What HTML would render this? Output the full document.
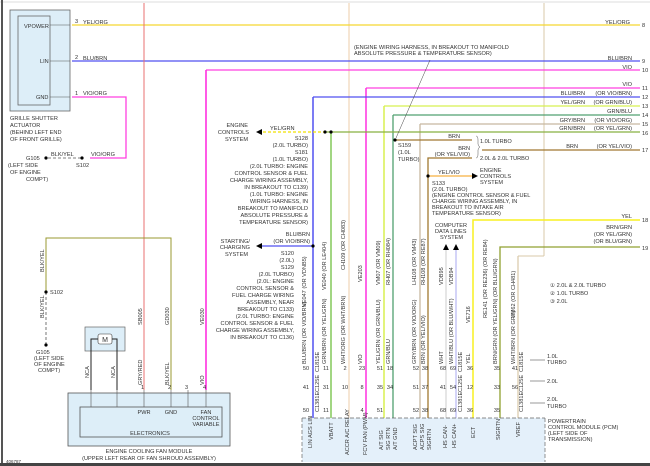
<!DOCTYPE html>
<html><head><meta charset="utf-8"><style>
html,body{margin:0;padding:0;background:#fff;}
svg{display:block;font-family:"Liberation Sans",sans-serif;}
text{font-size:5.6px;fill:#333;}
.r{text-anchor:end}
.m{text-anchor:middle}
</style></head><body>
<svg width="650" height="466" viewBox="0 0 650 466" xmlns="http://www.w3.org/2000/svg">
<rect width="650" height="466" fill="#fff"/>
<line x1="0" y1="2" x2="650" y2="2" stroke="#ddd" stroke-width="1"/>
<line x1="2" y1="0" x2="2" y2="466" stroke="#555" stroke-width="2"/>
<line x1="0" y1="464.5" x2="650" y2="464.5" stroke="#444" stroke-width="3"/>

<!-- light vertical tan guides -->
<line x1="349" y1="3" x2="349" y2="418" stroke="#f0d6b8" stroke-width="1.2"/>
<line x1="544" y1="3" x2="544" y2="256" stroke="#d8c8a8" stroke-width="1"/>
<line x1="518" y1="256" x2="544" y2="256" stroke="#d8c8a8" stroke-width="1"/>
<line x1="518" y1="256" x2="518" y2="418" stroke="#d8c8a8" stroke-width="1.2"/>

<!-- Grille shutter actuator -->
<rect x="10" y="10" width="60" height="101" fill="#ddeef8" stroke="#666" stroke-width="0.8"/>
<rect x="18" y="16" width="32" height="89" fill="#ddeef8" stroke="#666" stroke-width="0.8"/>
<text x="24" y="28">VPOWER</text>
<text x="40" y="63">LIN</text>
<text x="36" y="99">GND</text>
<line x1="50" y1="25" x2="70" y2="25" stroke="#555" stroke-width="0.6"/>
<line x1="50" y1="61" x2="70" y2="61" stroke="#555" stroke-width="0.6"/>
<line x1="50" y1="97" x2="70" y2="97" stroke="#555" stroke-width="0.6"/>
<text x="10" y="120">GRILLE SHUTTER</text>
<text x="10" y="127">ACTUATOR</text>
<text x="10" y="134">(BEHIND LEFT END</text>
<text x="10" y="141">OF FRONT GRILLE)</text>

<!-- top wires -->
<line x1="72" y1="25" x2="640" y2="25" stroke="#f5d830" stroke-width="1.3"/>
<text x="75" y="23">3</text><text x="83" y="24">YEL/ORG</text>
<text x="630" y="24" class="r">YEL/ORG</text><text x="642" y="27">8</text>
<line x1="72" y1="61" x2="640" y2="61" stroke="#5050f0" stroke-width="1.3"/>
<text x="75" y="59">2</text><text x="83" y="60">BLU/BRN</text>
<text x="632" y="60" class="r">BLU/BRN</text><text x="642" y="63">9</text>
<line x1="206" y1="70" x2="640" y2="70" stroke="#ff40e0" stroke-width="1.3"/>
<text x="632" y="69" class="r">VIO</text><text x="642" y="72">10</text>
<polyline points="72,97 126,97 126,158 90,158" fill="none" stroke="#ff40e0" stroke-width="1.3"/>
<text x="75" y="95">1</text><text x="83" y="95">VIO/ORG</text>
<text x="91" y="156">VIO/ORG</text>
<line x1="48" y1="158" x2="82" y2="158" stroke="#555" stroke-width="0.8" stroke-dasharray="3,2"/>
<circle cx="82" cy="158" r="1.6" fill="#000"/><circle cx="46" cy="158" r="1.6" fill="#000"/>
<text x="51" y="156">BLK/YEL</text>
<text x="76" y="167">S102</text>
<text x="26" y="160">G105</text>
<text x="8" y="167">(LEFT SIDE</text><text x="10" y="174">OF ENGINE</text><text x="26" y="181">COMPT)</text>

<!-- red vertical -->
<line x1="144" y1="3" x2="144" y2="390" stroke="#e87070" stroke-width="1"/>
<!-- magenta big -->
<line x1="206" y1="70" x2="206" y2="390" stroke="#ff30e0" stroke-width="1.6"/>

<!-- right-side wires -->
<line x1="366" y1="88" x2="640" y2="88" stroke="#ff40e0" stroke-width="1.3"/>
<line x1="366" y1="88" x2="366" y2="418" stroke="#ff30e0" stroke-width="1.5"/>
<text x="632" y="86" class="r">VIO</text><text x="642" y="90">11</text>
<line x1="313" y1="97" x2="640" y2="97" stroke="#5050f0" stroke-width="1.3"/>
<line x1="313" y1="97" x2="313" y2="418" stroke="#5050f0" stroke-width="1.5"/>
<text x="585" y="95" class="r">BLU/BRN</text><text x="632" y="95" class="r">(OR VIO/BRN)</text><text x="642" y="99">12</text>
<line x1="384" y1="106" x2="640" y2="106" stroke="#d8f050" stroke-width="1.3"/>
<line x1="384" y1="106" x2="384" y2="418" stroke="#d8f050" stroke-width="1.5"/>
<text x="585" y="104" class="r">YEL/GRN</text><text x="632" y="104" class="r">(OR GRN/BLU)</text><text x="642" y="108">13</text>
<line x1="393" y1="115" x2="640" y2="115" stroke="#50a070" stroke-width="1.3"/>
<line x1="393" y1="115" x2="393" y2="418" stroke="#50a070" stroke-width="1.3"/>
<text x="632" y="113" class="r">GRN/BLU</text><text x="642" y="117">14</text>
<line x1="420" y1="124" x2="640" y2="124" stroke="#c8b8a0" stroke-width="1.3"/>
<line x1="420" y1="124" x2="420" y2="418" stroke="#c8b8a0" stroke-width="1.3"/>
<text x="585" y="122" class="r">GRY/BRN</text><text x="632" y="122" class="r">(OR VIO/ORG)</text><text x="642" y="126">15</text>
<line x1="325" y1="132" x2="640" y2="132" stroke="#88b040" stroke-width="1.3"/>
<line x1="331" y1="132" x2="331" y2="418" stroke="#70c040" stroke-width="1.3"/>
<line x1="263" y1="132" x2="325" y2="132" stroke="#f0e000" stroke-width="1.3" stroke-dasharray="3,2"/>
<circle cx="325" cy="132" r="1.6" fill="#000"/><circle cx="331" cy="132" r="1.6" fill="#000"/>
<text x="585" y="130" class="r">GRN/BRN</text><text x="632" y="130" class="r">(OR YEL/GRN)</text><text x="642" y="135">16</text>
<polygon points="256,132 262,129 262,135" fill="#000"/>
<text x="270" y="130">YEL/GRN</text>
<text x="248" y="127" class="r">ENGINE</text><text x="249" y="134" class="r">CONTROLS</text><text x="248" y="141" class="r">SYSTEM</text>
<text x="308" y="140" class="r">S128</text>
<text x="308" y="147" class="r">(2.0L TURBO)</text>
<text x="308" y="154" class="r">S181</text>
<text x="308" y="161" class="r">(1.0L TURBO)</text>
<text x="308" y="168" class="r">(2.0L TURBO: ENGINE</text>
<text x="308" y="175" class="r">CONTROL SENSOR &amp; FUEL</text>
<text x="308" y="182" class="r">CHARGE WIRING ASSEMBLY,</text>
<text x="308" y="189" class="r">IN BREAKOUT TO C139)</text>
<text x="308" y="196" class="r">(1.0L TURBO: ENGINE</text>
<text x="308" y="203" class="r">WIRING HARNESS, IN</text>
<text x="308" y="210" class="r">BREAKOUT TO MANIFOLD</text>
<text x="308" y="217" class="r">ABSOLUTE PRESSURE &amp;</text>
<text x="308" y="224" class="r">TEMPERATURE SENSOR)</text>

<!-- brown -->
<line x1="395" y1="140" x2="472" y2="140" stroke="#a07830" stroke-width="1.3"/>
<circle cx="395" cy="140" r="1.6" fill="#000"/>
<line x1="482" y1="150" x2="640" y2="150" stroke="#a07830" stroke-width="1.3"/>
<polyline points="472,158 428,158 428,418" fill="none" stroke="#a07830" stroke-width="1.3"/>
<text x="460" y="138" class="r">BRN</text><text x="470" y="150" class="r">BRN</text><text x="470" y="156" class="r">(OR YEL/VIO)</text>
<text x="480" y="143">1.0L TURBO</text><text x="480" y="160">2.0L &amp; 2.0L TURBO</text>
<path d="M476,136 q2,0 2,4 v4 q0,2 2,3 q-2,1 -2,3 v4 q0,4 -2,4" fill="none" stroke="#555" stroke-width="0.5"/>
<text x="578" y="148" class="r">BRN</text><text x="632" y="148" class="r">(OR YEL/VIO)</text><text x="642" y="152">17</text>
<text x="398" y="147">S159</text><text x="398" y="154">(1.0L</text><text x="398" y="161">TURBO)</text>
<line x1="396" y1="138" x2="430" y2="60" stroke="#444" stroke-width="0.5"/>
<text x="354" y="49">(ENGINE WIRING HARNESS, IN BREAKOUT TO MANIFOLD</text>
<text x="354" y="55">ABSOLUTE PRESSURE &amp; TEMPERATURE SENSOR)</text>

<line x1="428" y1="176" x2="472" y2="176" stroke="#f8b040" stroke-width="1.3"/>
<circle cx="428" cy="176" r="1.6" fill="#000"/>
<polygon points="478,176 472,173 472,179" fill="#000"/>
<text x="438" y="174">YEL/VIO</text>
<text x="480" y="172">ENGINE</text><text x="480" y="178">CONTROLS</text><text x="480" y="184">SYSTEM</text>
<text x="432" y="185">S133</text><text x="432" y="191">(2.0L TURBO)</text>
<text x="432" y="197">(ENGINE CONTROL SENSOR &amp; FUEL</text>
<text x="432" y="203">CHARGE WIRING ASSEMBLY, IN</text>
<text x="432" y="209">BREAKOUT TO INTAKE AIR</text>
<text x="432" y="215">TEMPERATURE SENSOR)</text>
<text x="435" y="227">COMPUTER</text><text x="435" y="233">DATA LINES</text><text x="440" y="239">SYSTEM</text>

<polyline points="640,220 473,220 473,418" fill="none" stroke="#f8f020" stroke-width="1.5"/>
<text x="632" y="218" class="r">YEL</text><text x="642" y="222">18</text>
<polyline points="640,247 500,247 500,418" fill="none" stroke="#90a030" stroke-width="1.3"/>
<text x="632" y="229" class="r">BRN/GRN</text><text x="632" y="236" class="r">(OR YEL/GRN)</text><text x="632" y="243" class="r">(OR BLU/GRN)</text><text x="642" y="250">19</text>
<line x1="446" y1="250" x2="446" y2="418" stroke="#ccc" stroke-width="1"/>
<line x1="456" y1="250" x2="456" y2="418" stroke="#a8a8f0" stroke-width="1"/>
<polygon points="446,244 443,250 449,250" fill="#000"/><polygon points="456,244 453,250 459,250" fill="#000"/>

<!-- starting/charging -->
<line x1="262" y1="246" x2="313" y2="246" stroke="#5050f0" stroke-width="1.3"/>
<polygon points="256,246 262,243 262,249" fill="#000"/><circle cx="313" cy="246" r="1.6" fill="#000"/>
<text x="310" y="236" class="r">BLU/BRN</text><text x="310" y="243" class="r">(OR VIO/BRN)</text>
<text x="250" y="243" class="r">STARTING/</text><text x="250" y="249" class="r">CHARGING</text><text x="248" y="256" class="r">SYSTEM</text>
<text x="294" y="255" class="r">S120</text><text x="294" y="262" class="r">(2.0L)</text><text x="294" y="269" class="r">S129</text>
<text x="294" y="276" class="r">(2.0L TURBO)</text><text x="294" y="283" class="r">(2.0L: ENGINE</text>
<text x="294" y="290" class="r">CONTROL SENSOR &amp;</text><text x="294" y="297" class="r">FUEL CHARGE WIRING</text>
<text x="294" y="304" class="r">ASSEMBLY, NEAR</text><text x="294" y="311" class="r">BREAKOUT TO C133)</text>
<text x="294" y="318" class="r">(2.0L TURBO: ENGINE</text><text x="294" y="325" class="r">CONTROL SENSOR &amp; FUEL</text>
<text x="294" y="332" class="r">CHARGE WIRING ASSEMBLY,</text><text x="294" y="339" class="r">IN BREAKOUT TO C136)</text>

<!-- vertical labels middle -->
<g>
<text transform="rotate(-90 306 307)" x="306" y="307">VE047 (OR VDNB5)</text>
<text transform="rotate(-90 306 364)" x="306" y="364">BLU/BRN (OR VIO/BRN)</text>
<text transform="rotate(-90 326 290)" x="326" y="290">VE040 (OR LE404)</text>
<text transform="rotate(-90 326 364)" x="326" y="364">GRN/BRN (OR YEL/GRN)</text>
<text transform="rotate(-90 345 270)" x="345" y="270">CH109 (OR CH083)</text>
<text transform="rotate(-90 345 364)" x="345" y="364">WHT/ORG (OR WHT/BRN)</text>
<text transform="rotate(-90 362 282)" x="362" y="282">VE203</text>
<text transform="rotate(-90 362 364)" x="362" y="364">VIO</text>
<text transform="rotate(-90 380 285)" x="380" y="285">VM07 (OR VM09)</text>
<text transform="rotate(-90 380 364)" x="380" y="364">YEL/GRN (OR GRN/BLU)</text>
<text transform="rotate(-90 390 285)" x="390" y="285">RH07 (OR RH084)</text>
<text transform="rotate(-90 390 364)" x="390" y="364">GRN/BLU</text>
<text transform="rotate(-90 416 285)" x="416" y="285">LH108 (OR VM43)</text>
<text transform="rotate(-90 416 364)" x="416" y="364">GRY/BRN (OR VIO/ORG)</text>
<text transform="rotate(-90 425 285)" x="425" y="285">RH108 (OR RE87)</text>
<text transform="rotate(-90 425 364)" x="425" y="364">BRN (OR YEL/VIO)</text>
<text transform="rotate(-90 443 285)" x="443" y="285">VDB95</text>
<text transform="rotate(-90 443 364)" x="443" y="364">WHT</text>
<text transform="rotate(-90 453 285)" x="453" y="285">VDB94</text>
<text transform="rotate(-90 453 364)" x="453" y="364">WHT/BLU (OR BLU/WHT)</text>
<text transform="rotate(-90 470 323)" x="470" y="323">VE716</text>
<text transform="rotate(-90 470 364)" x="470" y="364">YEL</text>
<text transform="rotate(-90 487 318)" x="487" y="318">RE141 (OR RE236) (OR RE84)</text>
<text transform="rotate(-90 497 364)" x="497" y="364">BRN/GRN (OR YEL/GRN) (OR BLU/GRN)</text>
<text transform="rotate(-90 515 318)" x="515" y="318">VM62 (OR CH481)</text>
<text transform="rotate(-90 515 364)" x="515" y="364">WHT/BRN (OR GRY)</text>
</g>
<g class="m">
<text x="306" y="389">41</text><text x="306" y="412">50</text><text x="306" y="370">50</text>
<text x="326" y="389">31</text><text x="326" y="370">11</text><text x="326" y="412">11</text>
<text x="345" y="389">10</text><text x="345" y="370">2</text>
<text x="362" y="389">8</text><text x="362" y="370">23</text><text x="362" y="412">4</text>
<text x="380" y="389">35</text><text x="380" y="370">51</text><text x="380" y="412">51</text>
<text x="390" y="389">34</text><text x="390" y="370">18</text>
<text x="416" y="389">51</text><text x="416" y="370">52</text><text x="416" y="412">52</text>
<text x="425" y="389">37</text><text x="425" y="370">38</text><text x="425" y="412">38</text>
<text x="443" y="389">41</text><text x="443" y="370">68</text><text x="443" y="412">68</text>
<text x="453" y="389">54</text><text x="453" y="370">69</text><text x="453" y="412">69</text>
<text x="470" y="389">12</text><text x="470" y="370">36</text><text x="470" y="412">36</text>
<text x="497" y="389">33</text><text x="497" y="370">35</text><text x="497" y="412">35</text>
<text x="515" y="389">56</text><text x="515" y="370">41</text>
</g>
<g>
<text transform="rotate(-90 319 412)" x="319" y="412">C1381E</text>
<text transform="rotate(-90 319 392)" x="319" y="392">C125E</text>
<text transform="rotate(-90 319 372)" x="319" y="372">C1815E</text>
<text transform="rotate(-90 462 412)" x="462" y="412">C1381E</text>
<text transform="rotate(-90 462 392)" x="462" y="392">C125E</text>
<text transform="rotate(-90 462 372)" x="462" y="372">C1815E</text>
<text transform="rotate(-90 523 412)" x="523" y="412">C1381E</text>
<text transform="rotate(-90 523 392)" x="523" y="392">C125E</text>
<text transform="rotate(-90 523 372)" x="523" y="372">C1815E</text>
</g>
<line x1="530" y1="360" x2="545" y2="360" stroke="#333" stroke-width="0.5"/><text x="547" y="358">1.0L</text><text x="547" y="364">TURBO</text>
<line x1="530" y1="381" x2="545" y2="381" stroke="#333" stroke-width="0.5"/><text x="547" y="383">2.0L</text>
<line x1="530" y1="403" x2="545" y2="403" stroke="#333" stroke-width="0.5"/><text x="547" y="401">2.0L</text><text x="547" y="408">TURBO</text>
<text x="550" y="287">① 2.0L &amp; 2.0L TURBO</text>
<text x="550" y="295">② 1.0L TURBO</text>
<text x="550" y="303">③ 2.0L</text>

<!-- PCM connector -->
<rect x="302" y="418" width="243" height="44" fill="#e4f0fa"/>
<line x1="302" y1="418" x2="545" y2="418" stroke="#666" stroke-width="0.7" stroke-dasharray="4,2"/>
<line x1="302" y1="418" x2="302" y2="462" stroke="#666" stroke-width="0.7" stroke-dasharray="4,2"/>
<line x1="545" y1="418" x2="545" y2="462" stroke="#666" stroke-width="0.7" stroke-dasharray="4,2"/>
<g>
<text transform="rotate(-90 312 448)" x="312" y="448">LIN AGS LIN</text>
<text transform="rotate(-90 333 440)" x="333" y="440">VBATT</text>
<text transform="rotate(-90 349 455)" x="349" y="455">ACCR A/C RELAY</text>
<text transform="rotate(-90 367 455)" x="367" y="455">FCV FAN (PWM)</text>
<text transform="rotate(-90 383 450)" x="383" y="450">A/T SIG</text>
<text transform="rotate(-90 390 450)" x="390" y="450">SIG RTN</text>
<text transform="rotate(-90 397 450)" x="397" y="450">A/T GND</text>
<text transform="rotate(-90 417 450)" x="417" y="450">ACPT SIG</text>
<text transform="rotate(-90 424 450)" x="424" y="450">ACPS SIG</text>
<text transform="rotate(-90 431 450)" x="431" y="450">SIGRTN</text>
<text transform="rotate(-90 447 448)" x="447" y="448">HS CAN-</text>
<text transform="rotate(-90 456 448)" x="456" y="448">HS CAN+</text>
<text transform="rotate(-90 475 438)" x="475" y="438">ECT</text>
<text transform="rotate(-90 500 440)" x="500" y="440">SIGRTN</text>
<text transform="rotate(-90 520 437)" x="520" y="437">VREF</text>
</g>
<text x="548" y="423">POWERTRAIN</text><text x="548" y="429">CONTROL MODULE (PCM)</text>
<text x="548" y="435">(LEFT SIDE OF</text><text x="548" y="441">TRANSMISSION)</text>

<!-- fan module -->
<polyline points="46,345 46,292" fill="none" stroke="#555" stroke-width="0.8" stroke-dasharray="3,2"/>
<polyline points="46,292 46,238 171,238 171,390" fill="none" stroke="#9a9a30" stroke-width="1"/>
<circle cx="46" cy="292" r="1.6" fill="#000"/><circle cx="46" cy="345" r="1.6" fill="#000"/>
<text x="50" y="294">S102</text>
<text transform="rotate(-90 44 272)" x="44" y="272">BLK/YEL</text>
<text transform="rotate(-90 44 318)" x="44" y="318">BLK/YEL</text>
<text x="36" y="354">G105</text><text x="34" y="360">(LEFT SIDE</text><text x="34" y="366">OF ENGINE</text><text x="38" y="372">COMPT)</text>
<rect x="85" y="327" width="40" height="24" fill="#ddeef8" stroke="#666" stroke-width="0.7"/>
<rect x="98" y="334" width="14" height="10" rx="2" fill="#fff" stroke="#333" stroke-width="0.6"/>
<text x="105" y="342" class="m" style="font-size:7px">M</text>
<polyline points="98,339 91,339 91,390" fill="none" stroke="#222" stroke-width="1"/>
<polyline points="112,339 117,339 117,390" fill="none" stroke="#222" stroke-width="1"/>
<text transform="rotate(-90 89 378)" x="89" y="378">NCA</text>
<text transform="rotate(-90 115 378)" x="115" y="378">NCA</text>
<text transform="rotate(-90 142 385)" x="142" y="385">GRY/RED</text>
<text transform="rotate(-90 169 385)" x="169" y="385">BLK/YEL</text>
<text transform="rotate(-90 204 385)" x="204" y="385">VIO</text>
<text transform="rotate(-90 142 325)" x="142" y="325">SB005</text>
<text transform="rotate(-90 169 325)" x="169" y="325">GD030</text>
<text transform="rotate(-90 204 325)" x="204" y="325">VE030</text>
<text x="141" y="389">1</text><text x="168" y="389">2</text><text x="185" y="389">3</text><text x="203" y="389">4</text>
<rect x="68" y="393" width="162" height="53" fill="#ddeef8" stroke="#555" stroke-width="0.8"/>
<rect x="80" y="407" width="142" height="30" fill="#ddeef8" stroke="#555" stroke-width="0.8"/>
<g stroke="#555" stroke-width="0.6">
<line x1="91" y1="390" x2="91" y2="407"/><line x1="117" y1="390" x2="117" y2="407"/>
<line x1="144" y1="390" x2="144" y2="407"/><line x1="171" y1="390" x2="171" y2="407"/>
<line x1="188" y1="390" x2="188" y2="407"/><line x1="206" y1="390" x2="206" y2="407"/>
</g>
<text x="144" y="414" class="m">PWR</text><text x="171" y="414" class="m">GND</text>
<text x="206" y="414" class="m">FAN</text><text x="206" y="420" class="m">CONTROL</text><text x="206" y="426" class="m">VARIABLE</text>
<text x="150" y="435" class="m">ELECTRONICS</text>
<text x="149" y="453" class="m">ENGINE COOLING FAN MODULE</text>
<text x="149" y="460" class="m">(UPPER LEFT REAR OF FAN SHROUD ASSEMBLY)</text>
<text x="6" y="463" style="font-size:4.5px">406787</text>
</svg>
</body></html>
